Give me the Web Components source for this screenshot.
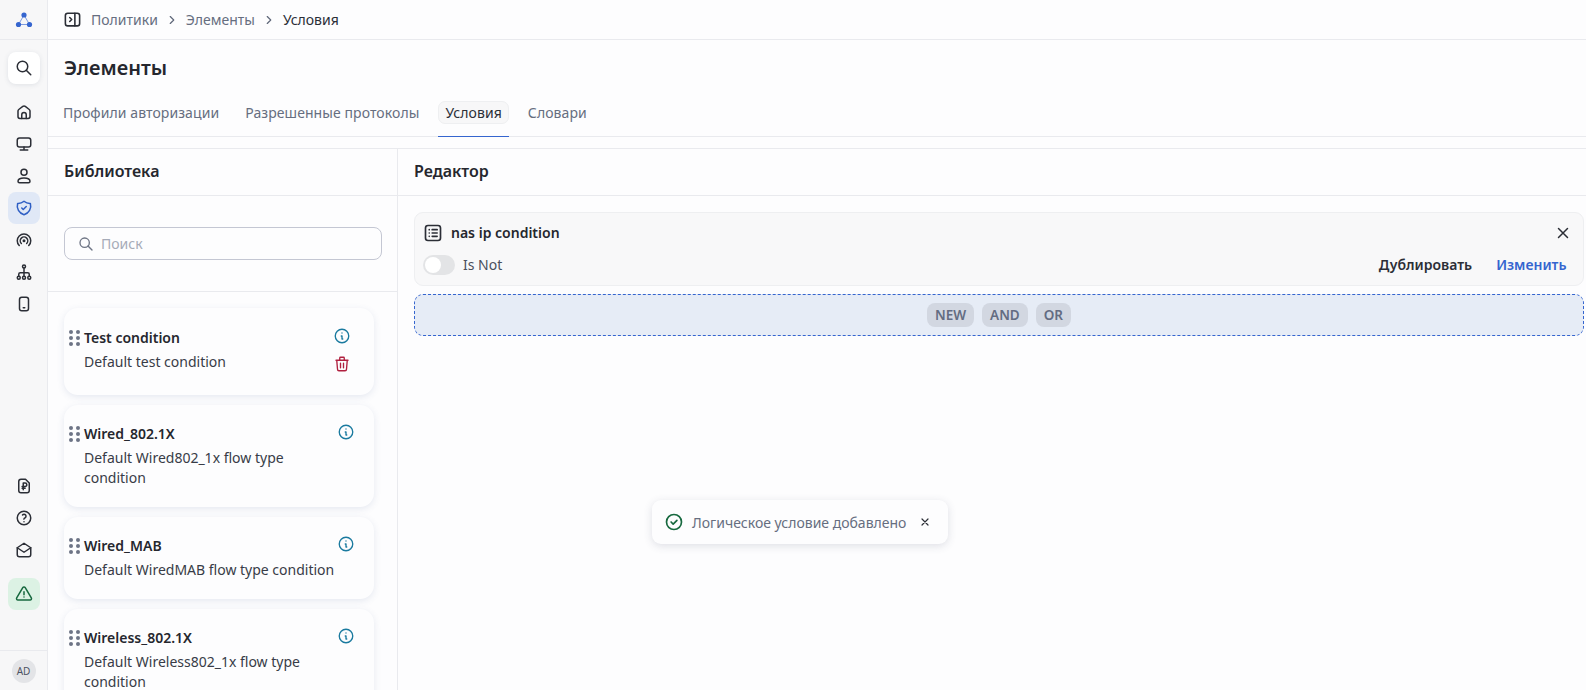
<!DOCTYPE html>
<html lang="ru">
<head>
<meta charset="utf-8">
<title>Элементы</title>
<style>
  html, body { margin: 0; height: 100%; overflow: hidden; }
  body {
    font-family: "Noto Sans", "Open Sans", sans-serif;
    font-size: 14px;
    color: #25272e;
    background: #fdfdfe;
  }
  #app { display: flex; height: 690px; position: relative; }
</style>
</head>
<body>
<div id="app">
  <app-sidebar></app-sidebar>
  <main-area>
    <app-breadcrumbs></app-breadcrumbs>
    <page-head></page-head>
    <split-view>
      <library-panel slot="left">
        <library-card name="Test condition" text="Default test condition" deletable></library-card>
        <library-card name="Wired_802.1X" text="Default Wired802_1x flow type condition"></library-card>
        <library-card name="Wired_MAB" text="Default WiredMAB flow type condition"></library-card>
        <library-card name="Wireless_802.1X" text="Default Wireless802_1x flow type condition"></library-card>
      </library-panel>
      <editor-panel slot="right"></editor-panel>
    </split-view>
  </main-area>
  <toast-message>Логическое условие добавлено</toast-message>
</div>

<script>
const ICONS = {
    search: '<circle cx="10" cy="10" r="7"/><path d="M21 21l-6-6"/>',
    home: '<path d="M19 8.7l-5.3-4.1a2.7 2.7 0 0 0-3.3 0L5 8.7A2.7 2.7 0 0 0 4 10.8V18a2.5 2.5 0 0 0 2.5 2.5h11A2.5 2.5 0 0 0 20 18v-7.2c0-.8-.4-1.6-1-2.1z"/><path d="M9 20.5v-5a3 3 0 0 1 6 0v5"/>',
    desktop: '<rect x="3" y="4" width="18" height="12" rx="3"/><path d="M7 20h10M12 16v4"/>',
    user: '<circle cx="12" cy="7" r="4"/><path d="M4 19c0-2.8 3.5-4.5 8-4.5s8 1.7 8 4.5c0 1.2-.8 2-2 2H6c-1.2 0-2-.8-2-2z"/>',
    shield: '<path d="M12 3a12 12 0 0 0 8.5 3A12 12 0 0 1 12 21 12 12 0 0 1 3.5 6 12 12 0 0 0 12 3z"/><path d="M9 12l2 2 4-4"/>',
    broadcast: '<path d="M18.36 19.36a9 9 0 1 0-12.72 0"/><path d="M15.54 16.54a5 5 0 1 0-7.08 0"/><circle cx="12" cy="13" r="1"/>',
    tree: '<circle cx="12" cy="4.5" r="2"/><circle cx="5" cy="19.5" r="2"/><circle cx="12" cy="19.5" r="2"/><circle cx="19" cy="19.5" r="2"/><path d="M12 6.5v11M5 17.5V15a2 2 0 0 1 2-2h10a2 2 0 0 1 2 2v2.5"/>',
    phone: '<rect x="6" y="3" width="12" height="18" rx="3"/><path d="M11 17h2"/>',
    rubdoc: '<path d="M8 3h6l5 5v10a3 3 0 0 1-3 3H8a3 3 0 0 1-3-3V6a3 3 0 0 1 3-3z"/><path d="M11 17V8h2.5a2.25 2.25 0 0 1 0 4.5h-4M9.5 15h4"/>',
    help: '<circle cx="12" cy="12" r="9"/><path d="M12 17v.01M12 13.5a1.5 1.5 0 0 1 1-1.5 2.6 2.6 0 1 0-3-4"/>',
    mail: '<path d="M3 9l9 6 9-6-9-6-9 6z"/><path d="M21 9v9a3 3 0 0 1-3 3H6a3 3 0 0 1-3-3V9"/>',
    alert: '<path d="M12 9v4M12 16h.01"/><path d="M10.36 3.59L2.26 17.13A1.91 1.91 0 0 0 3.89 20h16.22a1.91 1.91 0 0 0 1.63-2.87L13.64 3.59a1.91 1.91 0 0 0-3.28 0z"/>',
    panel: '<rect x="3" y="4" width="18" height="16" rx="3"/><path d="M15 4v16M8.5 9.5L11 12l-2.5 2.5"/>',
    chevron: '<path d="M9 6l6 6-6 6"/>',
    info: '<circle cx="12" cy="12" r="9"/><path d="M12 8h.01M11 12h1v4h1"/>',
    trash: '<path d="M4 7h16M10 11v6M14 11v6M5 7l1 12a2 2 0 0 0 2 2h8a2 2 0 0 0 2-2l1-12M9 7V4a1 1 0 0 1 1-1h4a1 1 0 0 1 1 1v3"/>',
    list: '<rect x="3" y="3" width="18" height="18" rx="3"/><path d="M11 8h6M11 12h6M11 16h6M7.5 8h.01M7.5 12h.01M7.5 16h.01"/>',
    close: '<path d="M18 6L6 18M6 6l12 12"/>',
    check: '<circle cx="12" cy="12" r="9"/><path d="M8.5 12l2.5 2.5 4.5-4.5"/>'
};

function icon(name, size, color, width) {
    return `<svg xmlns="http://www.w3.org/2000/svg" width="${size}" height="${size}" viewBox="0 0 24 24" fill="none" stroke="${color}" stroke-width="${width || 2}" stroke-linecap="round" stroke-linejoin="round" style="display:block;flex:none">${ICONS[name]}</svg>`;
}

class AppSidebar extends HTMLElement {
    constructor() {
        super();
        this.attachShadow({ mode: "open" });
        const top = ["home", "desktop", "user", "shield", "broadcast", "tree", "phone"];
        const bottom = ["rubdoc", "help", "mail"];
        const btn = (n, cls) => `<div class="btn ${cls || ""}">${icon(n, 18, n === "shield" ? "#2f5fc4" : (n === "alert" ? "#17693f" : "#2b2e36"), 2)}</div>`;
        this.shadowRoot.innerHTML = `
        <style>
            :host {
                display: flex;
                flex-direction: column;
                flex: none;
                width: 47px;
                height: 100%;
                background: #f7f7f8;
                border-right: 1px solid #e9eaee;
            }
            .logo {
                height: 39px;
                border-bottom: 1px solid #e9eaee;
                display: flex;
                align-items: center;
                justify-content: center;
            }
            nav {
                flex: 1;
                display: flex;
                flex-direction: column;
                align-items: center;
                padding-top: 12px;
            }
            .btn {
                width: 32px;
                height: 32px;
                border-radius: 8px;
                display: flex;
                align-items: center;
                justify-content: center;
            }
            .search {
                background: #fff;
                margin-bottom: 12px;
                box-shadow: 0 1px 5px rgba(60,70,100,.12);
            }
            .active { background: #e0e8f6; }
            .warn { background: #dcf2e4; margin-top: 12px; }
            .spacer { flex: 1; }
            .foot {
                height: 39px;
                border-top: 1px solid #e9eaee;
                display: flex;
                align-items: center;
                justify-content: center;
            }
            .avatar {
                width: 24px;
                height: 24px;
                border-radius: 50%;
                background: #e3e4e7;
                color: #4b5264;
                font-size: 10px;
                display: flex;
                align-items: center;
                justify-content: center;
            }
        </style>
        <div class="logo">
            <svg width="18" height="18" viewBox="0 0 18 18">
                <path d="M9 4L3.5 13.5H14.5Z" fill="none" stroke="#7d9be0" stroke-width="1"/>
                <circle cx="9" cy="4" r="2.6" fill="#3565cf"/>
                <circle cx="3.5" cy="13.5" r="2.6" fill="#3565cf"/>
                <circle cx="14.5" cy="13.5" r="2.6" fill="#3565cf"/>
            </svg>
        </div>
        <nav>
            ${btn("search", "search")}
            ${top.map(n => btn(n, n === "shield" ? "active" : "")).join("")}
            <div class="spacer"></div>
            ${bottom.map(n => btn(n)).join("")}
            ${btn("alert", "warn")}
            <div style="height:40px"></div>
        </nav>
        <div class="foot"><div class="avatar">AD</div></div>
        `;
    }
}
customElements.define("app-sidebar", AppSidebar);

class MainArea extends HTMLElement {
    constructor() {
        super();
        this.attachShadow({ mode: "open" });
        this.shadowRoot.innerHTML = `
        <style>
            :host {
                display: flex;
                flex-direction: column;
                flex: 1;
                min-width: 0;
                height: 100%;
                overflow: hidden;
            }
        </style>
        <slot></slot>
        `;
    }
}
customElements.define("main-area", MainArea);

class AppBreadcrumbs extends HTMLElement {
    constructor() {
        super();
        this.attachShadow({ mode: "open" });
        const sep = `<span class="sep">${icon("chevron", 14, "#5f6779", 2)}</span>`;
        this.shadowRoot.innerHTML = `
        <style>
            :host {
                display: flex;
                align-items: center;
                flex: none;
                height: 39px;
                padding-left: 15px;
                border-bottom: 1px solid #e9eaee;
                font-size: 14px;
                color: #666e80;
            }
            .panel { margin-right: 9px; }
            .sep { margin: 0 7px; }
            .cur { color: #2b2e36; }
        </style>
        <span class="panel">${icon("panel", 19, "#2b2e36", 2)}</span>
        <span>Политики</span>${sep}<span>Элементы</span>${sep}<span class="cur">Условия</span>
        `;
    }
}
customElements.define("app-breadcrumbs", AppBreadcrumbs);

class PageHead extends HTMLElement {
    constructor() {
        super();
        this.attachShadow({ mode: "open" });
        this.shadowRoot.innerHTML = `
        <style>
            :host {
                display: block;
                flex: none;
            }
            h1 {
                margin: 0;
                padding: 14px 16px 0;
                height: 38px;
                font-size: 20px;
                line-height: 27px;
                font-weight: 600;
                color: #25272e;
            }
            .tabs {
                display: flex;
                align-items: flex-end;
                gap: 12px;
                height: 44px;
                padding-left: 8px;
                border-bottom: 1px solid #e9eaee;
                letter-spacing: .08px;
            }
            .tab {
                display: flex;
                padding-bottom: 12px;
                margin-bottom: -1px;
                border-bottom: 1px solid transparent;
                color: #666e80;
            }
            .tab span {
                padding: 1px 6px;
                border: 1px solid transparent;
                border-radius: 7px;
                line-height: 19px;
            }
            .tab.on { border-bottom-color: #3565cf; color: #2b2e36; }
            .tab.on span { background: #f7f7f8; border-color: #eeeff1; }
            .gap { height: 11px; border-bottom: 1px solid #e9eaee; }
        </style>
        <h1>Элементы</h1>
        <div class="tabs">
            <div class="tab"><span>Профили авторизации</span></div>
            <div class="tab"><span>Разрешенные протоколы</span></div>
            <div class="tab on"><span>Условия</span></div>
            <div class="tab"><span>Словари</span></div>
        </div>
        <div class="gap"></div>
        `;
    }
}
customElements.define("page-head", PageHead);

class SplitView extends HTMLElement {
    constructor() {
        super();
        this.attachShadow({ mode: "open" });
        this.shadowRoot.innerHTML = `
        <style>
            :host {
                display: grid;
                grid-template-columns: 350px 1fr;
                flex: 1;
                min-height: 0;
            }
        </style>
        <slot name="left"></slot>
        <slot name="right"></slot>
        `;
    }
}
customElements.define("split-view", SplitView);

class LibraryPanel extends HTMLElement {
    constructor() {
        super();
        this.attachShadow({ mode: "open" });
        this.shadowRoot.innerHTML = `
        <style>
            :host {
                display: flex;
                flex-direction: column;
                min-height: 0;
                overflow: hidden;
                border-right: 1px solid #e9eaee;
            }
            h2 {
                margin: 0;
                height: 47px;
                padding: 0 16px 2px;
                box-sizing: border-box;
                flex: none;
                display: flex;
                align-items: center;
                font-size: 16px;
                font-weight: 600;
                border-bottom: 1px solid #e9eaee;
            }
            .searchwrap {
                flex: none;
                padding: 31px 15px 31px 16px;
                border-bottom: 1px solid #e9eaee;
            }
            .box {
                display: flex;
                align-items: center;
                gap: 7px;
                height: 31px;
                padding: 0 13px;
                border: 1px solid #c4c7d3;
                border-radius: 8px;
                color: #a6abb8;
                background: #fdfdfe;
            }
            .list {
                display: flex;
                flex-direction: column;
                gap: 10px;
                padding: 16px 23px 0 16px;
            }
        </style>
        <h2>Библиотека</h2>
        <div class="searchwrap">
            <div class="box">${icon("search", 16, "#6e7585", 2)}<span>Поиск</span></div>
        </div>
        <div class="list"><slot></slot></div>
        `;
    }
}
customElements.define("library-panel", LibraryPanel);

class LibraryCard extends HTMLElement {
    constructor() {
        super();
        this.attachShadow({ mode: "open" });
    }

    connectedCallback() {
        const deletable = this.hasAttribute("deletable");
        this.shadowRoot.innerHTML = `
        <style>
            :host {
                display: flex;
                flex: none;
                gap: 4px;
                padding: 18.5px 19px 18.5px 5px;
                background: #fdfdfe;
                border-radius: 14px;
                box-shadow: 0 2px 7px rgba(70,90,150,.13);
            }
            .grip {
                display: grid;
                grid-template-columns: 4px 4px;
                grid-auto-rows: 4px;
                gap: 2px 3px;
                flex: none;
                margin-top: 3px;
                align-self: flex-start;
            }
            .grip i { border-radius: 50%; background: #6d7486; }
            .body { flex: 1; min-width: 0; margin-right: -8px; }
            b {
                display: block;
                font-weight: 600;
                line-height: 22px;
                margin-bottom: 3px;
                color: #25272e;
            }
            p { margin: 0; line-height: 20px; color: #383c47; }
            .acts {
                display: flex;
                flex-direction: column;
                align-items: center;
                gap: 10px;
                flex: none;
                margin-top: ${deletable ? "0.5px" : "-0.5px"};
                margin-right: ${deletable ? "4px" : "0"};
                margin-bottom: ${deletable ? "3px" : "0"};
            }
        </style>
        <div class="grip"><i></i><i></i><i></i><i></i><i></i><i></i></div>
        <div class="body"><b>${this.getAttribute("name")}</b><p>${this.getAttribute("text")}</p></div>
        <div class="acts">
            ${icon("info", 18, "#1a7a9f", 1.8)}
            ${deletable ? icon("trash", 18, "#b0203f", 1.8) : ""}
        </div>
        `;
    }
}
customElements.define("library-card", LibraryCard);

class EditorPanel extends HTMLElement {
    constructor() {
        super();
        this.attachShadow({ mode: "open" });
        this.shadowRoot.innerHTML = `
        <style>
            :host { display: block; min-width: 0; }
            h2 {
                margin: 0;
                height: 47px;
                box-sizing: border-box;
                padding: 0 16px 2px;
                display: flex;
                align-items: center;
                font-size: 16px;
                font-weight: 600;
                border-bottom: 1px solid #e9eaee;
            }
            .content { padding: 16px 2px 0 16px; }
            .cond {
                background: #f8f8f9;
                border: 1px solid #eeeff1;
                border-radius: 9px;
                padding: 7px 16.5px 6px 8px;
            }
            .row { display: flex; align-items: center; }
            .title { height: 24px; gap: 8px; font-weight: 600; }
            .title svg { margin-top: 2px; }
            .title .x { margin-left: auto; margin-right: -5px; }
            .row2 { height: 30px; margin-top: 5px; }
            .toggle {
                width: 32px;
                height: 20px;
                margin-top: 2px;
                border-radius: 10px;
                background: #e3e4e6;
                position: relative;
                margin-right: 8px;
            }
            .toggle::after {
                content: "";
                position: absolute;
                left: 2px;
                top: 2px;
                width: 16px;
                height: 16px;
                border-radius: 50%;
                background: #fff;
            }
            .isnot { color: #4a4f5c; }
            .dup { margin-left: auto; font-weight: 600; color: #2b2e36; }
            .edit { margin-left: 24px; font-weight: 600; color: #3565cf; }
            .drop {
                display: flex;
                align-items: center;
                justify-content: center;
                gap: 8px;
                height: 40px;
                margin-top: 8px;
                background: #e6ecf6;
                border: 1px dashed #3565cf;
                border-radius: 9px;
            }
            .chip {
                padding: 0 8px;
                height: 24px;
                display: flex;
                align-items: center;
                border-radius: 8px;
                background: #d2d7e1;
                color: #636c82;
                font-size: 13.5px;
                font-weight: 600;
            }
        </style>
        <h2>Редактор</h2>
        <div class="content">
            <div class="cond">
                <div class="row title">${icon("list", 20, "#2b2e36", 2)}<span>nas ip condition</span><span class="x">${icon("close", 18, "#2b2e36", 2)}</span></div>
                <div class="row row2"><span class="toggle"></span><span class="isnot">Is Not</span><span class="dup">Дублировать</span><span class="edit">Изменить</span></div>
            </div>
            <div class="drop"><span class="chip">NEW</span><span class="chip">AND</span><span class="chip">OR</span></div>
        </div>
        `;
    }
}
customElements.define("editor-panel", EditorPanel);

class ToastMessage extends HTMLElement {
    constructor() {
        super();
        this.attachShadow({ mode: "open" });
        this.shadowRoot.innerHTML = `
        <style>
            :host {
                position: absolute;
                left: 652px;
                top: 500px;
                display: flex;
                align-items: center;
                height: 44px;
                padding: 0 17px 0 12px;
                background: #fdfdfe;
                border-radius: 9px;
                box-shadow: 0 2px 8px rgba(60,70,100,.16);
                color: #666e80;
            }
            .msg { margin: 0 13px 0 8px; }
        </style>
        ${icon("check", 20, "#17693f", 2)}
        <span class="msg"><slot></slot></span>
        ${icon("close", 12, "#2b2e36", 2.4)}
        `;
    }
}
customElements.define("toast-message", ToastMessage);
</script>
</body>
</html>
